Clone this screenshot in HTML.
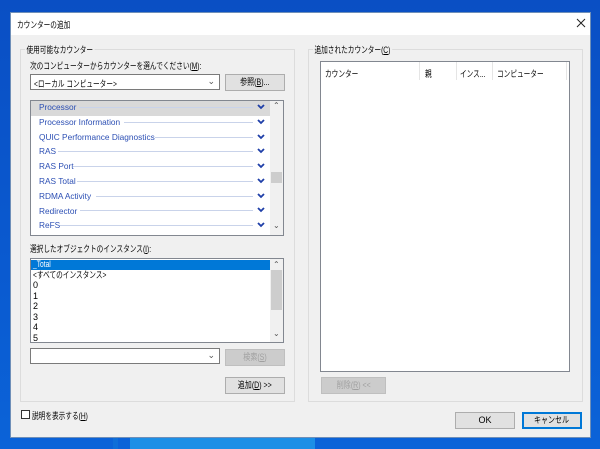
<!DOCTYPE html>
<html><head><meta charset="utf-8"><style>
*{margin:0;padding:0;box-sizing:border-box}
body{width:600px;height:449px;overflow:hidden;position:relative;background:linear-gradient(180deg,#0a4fc4 0%,#0a5ad0 60%,#0b63d8 100%);font-family:"Liberation Sans","Noto Sans CJK JP",sans-serif;font-size:9px;color:#000}
.a{position:absolute;white-space:nowrap}
.j{transform:scaleX(0.74);transform-origin:0 50%}
.jc{display:inline-block;transform:scaleX(0.78)}
.dlg{position:absolute;left:10px;top:12px;width:581px;height:426px;background:#f0f0f0;border:1px solid #6f8fb8}
.title{position:absolute;left:0;top:0;width:579px;height:22px;background:#fff}
.grp{position:absolute;border:1px solid #dcdcdc}
.lbl{background:#f0f0f0;padding:0 2px}
.box{position:absolute;background:#fff;border:1px solid #828790}
.btn{position:absolute;background:#e1e1e1;border:1px solid #adadad;text-align:center;line-height:15px;white-space:nowrap}
.dis{color:#a0a0a0;background:#cccccc;border-color:#bfbfbf}
.row{position:absolute;left:9px;height:14px;line-height:14px;color:#2c4fb4;font-size:8.3px;white-space:nowrap}
.line{position:absolute;height:1px;background:#c9d3ea}
.sb{position:absolute;right:0;top:0;width:13px;bottom:0;background:#f0f0f0}
</style></head><body>
<div style="position:absolute;left:130px;top:438px;width:185px;height:11px;background:#1c8fe6"></div>
<div style="position:absolute;left:113px;top:438px;width:5px;height:11px;background:#0e6ed8"></div>
<div class="dlg">
 <div class="title"></div>
 <div class="a j" style="left:6px;top:5px">カウンターの追加</div>
 <svg class="a" style="left:565px;top:5px" width="10" height="10" stroke="#222" stroke-width="1"><path d="M1 1l8 8M9 1l-8 8"/></svg>

 <div class="grp" style="left:9px;top:36px;width:275px;height:353px"></div>
 <div class="a lbl j" style="left:14px;top:30px">使用可能なカウンター</div>
 <div class="a j" style="left:19px;top:46px">次のコンピューターからカウンターを選んでください(<u>M</u>):</div>
 <div class="box" style="left:19px;top:61px;width:190px;height:16px;border-color:#7a7a7a"><span class="a j" style="left:3px;top:2px">&lt;ローカル コンピューター&gt;</span><span class="a" style="right:4px;top:1px;color:#555">⌄</span></div>
 <div class="btn" style="left:214px;top:61px;width:60px;height:17px"><span class="jc">参照(<u>B</u>)...</span></div>

 <div class="box" style="left:19px;top:87px;width:254px;height:136px;overflow:hidden">
  <div style="position:absolute;left:0;top:0;width:239px;height:15px;background:#d9d9d9"></div>
  <div class="sb"><div class="a" style="left:3px;top:0;color:#555;font-size:8px">⌃</div><div style="position:absolute;left:1px;top:71px;width:11px;height:11px;background:#cdcdcd"></div><div class="a" style="left:3px;top:120px;color:#555;font-size:8px">⌄</div></div>
 </div>

 <div class="a j" style="left:19px;top:229px">選択したオブジェクトのインスタンス(<u>I</u>):</div>
 <div class="box" style="left:19px;top:245px;width:254px;height:85px;overflow:hidden">
  <div style="position:absolute;left:0;top:1px;width:239px;height:10px;background:#0078d7"></div>
  <div class="a j" style="left:2px;top:0;color:#fff;line-height:11px">_Total</div>
  <div class="a j" style="left:2px;top:10.5px;line-height:11px">&lt;すべてのインスタンス&gt;</div>
  <div class="a" style="left:2px;top:21px;line-height:11px">0</div>
  <div class="a" style="left:2px;top:31.5px;line-height:11px">1</div>
  <div class="a" style="left:2px;top:42px;line-height:11px">2</div>
  <div class="a" style="left:2px;top:52.5px;line-height:11px">3</div>
  <div class="a" style="left:2px;top:63px;line-height:11px">4</div>
  <div class="a" style="left:2px;top:73.5px;line-height:11px">5</div>
  <div class="sb"><div class="a" style="left:3px;top:1px;color:#555;font-size:8px">⌃</div><div style="position:absolute;left:1px;top:11px;width:11px;height:40px;background:#cdcdcd"></div><div class="a" style="left:3px;top:70px;color:#555;font-size:8px">⌄</div></div>
 </div>
 <div class="box" style="left:19px;top:335px;width:190px;height:16px;border-color:#7a7a7a"><span class="a" style="right:4px;top:1px;color:#555">⌄</span></div>
 <div class="btn dis" style="left:214px;top:336px;width:60px;height:17px"><span class="jc">検索(<u>S</u>)</span></div>
 <div class="btn" style="left:214px;top:364px;width:60px;height:17px"><span class="jc">追加(<u>D</u>) &gt;&gt;</span></div>

 <div style="position:absolute;left:10px;top:397px;width:9px;height:9px;border:1px solid #333;background:#fff"></div>
 <div class="a j" style="left:21px;top:396px">説明を表示する(<u>H</u>)</div>

 <div class="grp" style="left:297px;top:36px;width:275px;height:353px"></div>
 <div class="a lbl j" style="left:302px;top:30px">追加されたカウンター(<u>C</u>)</div>
 <div class="box" style="left:309px;top:48px;width:250px;height:311px">
  <div class="a j" style="left:4px;top:5px">カウンター</div>
  <div class="a j" style="left:104px;top:5px">親</div>
  <div class="a j" style="left:139px;top:5px">インス...</div>
  <div class="a j" style="left:176px;top:5px">コンピューター</div>
  <div style="position:absolute;left:98px;top:0;width:1px;height:18px;background:#e5e5e5"></div>
  <div style="position:absolute;left:135px;top:0;width:1px;height:18px;background:#e5e5e5"></div>
  <div style="position:absolute;left:171px;top:0;width:1px;height:18px;background:#e5e5e5"></div>
  <div style="position:absolute;left:245px;top:0;width:1px;height:18px;background:#e5e5e5"></div>
 </div>
 <div class="btn dis" style="left:310px;top:364px;width:65px;height:17px"><span class="jc">削除(<u>R</u>) &lt;&lt;</span></div>

 <div class="btn" style="left:444px;top:399px;width:60px;height:17px">OK</div>
 <div class="btn" style="left:511px;top:399px;width:60px;height:17px;border:1px solid #0078d7;box-shadow:inset 0 0 0 1px #0078d7"><span class="jc">キャンセル</span></div>
</div>
<div style="position:absolute;left:30px;top:100px;width:239px;height:133px;overflow:hidden">
 <div class="row" style="top:0">Processor</div><div class="line" style="left:49px;width:174px;top:7px"></div>
 <div class="row" style="top:14.8px">Processor Information</div><div class="line" style="left:94px;width:129px;top:22px"></div>
 <div class="row" style="top:29.6px">QUIC Performance Diagnostics</div><div class="line" style="left:125px;width:98px;top:37px"></div>
 <div class="row" style="top:44.4px">RAS</div><div class="line" style="left:28px;width:195px;top:51px"></div>
 <div class="row" style="top:59.2px">RAS Port</div><div class="line" style="left:43px;width:180px;top:66px"></div>
 <div class="row" style="top:74px">RAS Total</div><div class="line" style="left:47px;width:176px;top:81px"></div>
 <div class="row" style="top:88.8px">RDMA Activity</div><div class="line" style="left:66px;width:157px;top:96px"></div>
 <div class="row" style="top:103.6px">Redirector</div><div class="line" style="left:50px;width:173px;top:110px"></div>
 <div class="row" style="top:118.4px">ReFS</div><div class="line" style="left:30px;width:193px;top:125px"></div>
 <svg style="position:absolute;left:227px;top:0" width="8" height="133" stroke="#1f3fa8" stroke-width="1.8" fill="none">
  <path d="M1 5l3 3 3-3M1 20l3 3 3-3M1 35l3 3 3-3M1 49l3 3 3-3M1 64l3 3 3-3M1 79l3 3 3-3M1 94l3 3 3-3M1 108l3 3 3-3M1 123l3 3 3-3"/>
 </svg>
</div>
</body></html>
